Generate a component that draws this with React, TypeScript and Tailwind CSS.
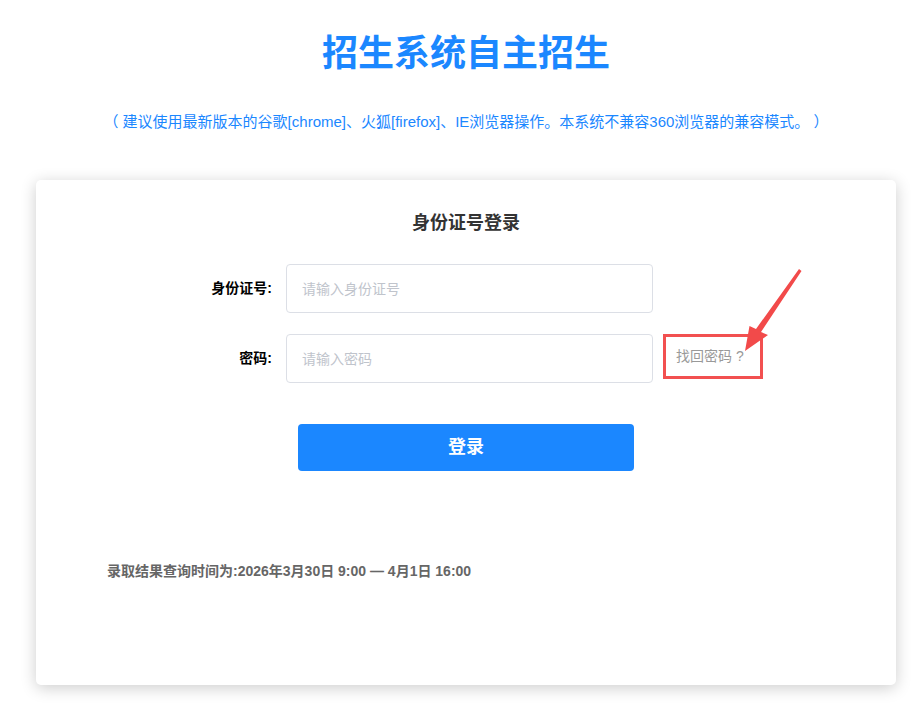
const App = () => {
  return (
    <div
      className="min-h-[704px] bg-white"
      style={{ fontFamily: '"Liberation Sans", "Noto Sans CJK SC", sans-serif' }}
    >
      <div className="ml-[36px] w-[860px]">
        <h1 className="pt-[32px] text-center text-[36px] font-bold leading-[44px] text-[#1b87ff]">
          招生系统自主招生
        </h1>
        <p className="mt-[35px] text-center text-[15px] leading-[22px] text-[#1b87ff]">
          （ 建议使用最新版本的谷歌[chrome]、火狐[firefox]、IE浏览器操作。本系统不兼容360浏览器的兼容模式。 ）
        </p>

        <div className="relative mt-[47px] h-[505px] rounded-[5px] bg-white shadow-[0_3px_16px_rgba(0,0,0,0.2)]">
          <h2 className="pt-[30px] text-center text-[18px] font-bold leading-[26px] text-[#333]">
            身份证号登录
          </h2>

          <div className="mt-[28px] flex items-center">
            <label className="w-[237px] pr-[1px] text-right text-[14px] font-bold text-black">身份证号:</label>
            <input
              className="ml-[13px] h-[49px] w-[367px] rounded-[4px] border border-[#dcdfe6] px-[15px] text-[14px] outline-none placeholder:text-[#c0c4cc]"
              placeholder="请输入身份证号"
            />
          </div>

          <div className="mt-[21px] flex items-start">
            <label className="w-[237px] pr-[1px] text-right text-[14px] font-bold leading-[49px] text-black">密码:</label>
            <input
              type="password"
              className="ml-[13px] h-[49px] w-[367px] rounded-[4px] border border-[#dcdfe6] px-[15px] text-[14px] outline-none placeholder:text-[#c0c4cc]"
              placeholder="请输入密码"
            />
            <div className="ml-[10px] flex h-[45px] w-[100px] items-center border-[3px] border-[#f25050] pl-[10px] text-[14px] text-[#999]">
              找回密码 ?
            </div>
          </div>

          <button className="ml-[262px] mt-[41px] h-[47px] w-[336px] rounded-[4px] bg-[#1b87ff] text-[18px] font-bold text-white">
            登录
          </button>

          <p className="ml-[71px] mt-[90px] text-[14px] font-bold text-[#666]">
            录取结果查询时间为:2026年3月30日 9:00 — 4月1日 16:00
          </p>

          {/* annotation arrow */}
          <svg
            className="absolute left-[704px] top-[84px]"
            width="70"
            height="90"
            viewBox="740 264 70 90"
          >
            <polygon
              points="799,269 801.5,271 761,332 768,335 745,351 749.5,326 756,329"
              fill="#f24a4a"
            />
          </svg>
        </div>
      </div>
    </div>
  )
}

export default App
